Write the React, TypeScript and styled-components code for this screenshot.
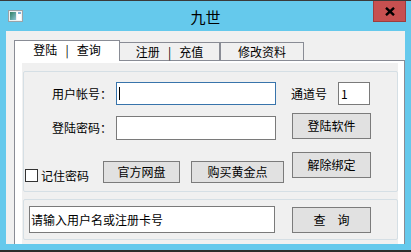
import React from 'react';
import styled, { createGlobalStyle } from 'styled-components';

const GlobalStyle = createGlobalStyle`
    html, body {
        margin: 0;
        padding: 0;
        background: #65c9ec;
    }
    body {
        font-family: "Noto Sans CJK SC", "Noto Sans", sans-serif;
        font-size: 12px;
        color: #000;
    }
    * {
        box-sizing: border-box;
    }
`;

const Window = styled.div`
    width: 411px;
    height: 252px;
    background: #65c9ec;
    border-top: 1px solid #3a3a3a;
    border-bottom: 2px solid #2b2b2b;
    display: flex;
    flex-direction: column;
    overflow: hidden;
`;

const TitleBar = styled.div`
    height: 30px;
    display: grid;
    grid-template-columns: 1fr auto 1fr;
    flex-shrink: 0;
`;

const AppIcon = styled.div`
    padding: 9px 0 0 8px;
    line-height: 0;
`;

const Title = styled.div`
    font-size: 15px;
    line-height: 30px;
    padding-top: 1px;
`;

const TitleRight = styled.div`
    display: flex;
    justify-content: flex-end;
    align-items: flex-start;
    padding-right: 5px;
`;

const CloseButton = styled.div`
    width: 33px;
    height: 21px;
    background: #c75050;
    border: 1px solid #9e3d3d;
    border-top: none;
    display: flex;
    align-items: center;
    justify-content: center;
`;

const Client = styled.div`
    margin: 0 6px;
    height: 213px;
    background: #f0f0f0;
    padding-top: 9px;
    overflow: hidden;
`;

const TabStrip = styled.div`
    display: flex;
    align-items: flex-end;
    height: 20px;
    padding-left: 8px;
`;

const Tab = styled.div<{ $active?: boolean; $width: number; $leftBorder?: boolean }>`
    width: ${p => p.$width}px;
    height: ${p => (p.$active ? 21 : 18)}px;
    margin-bottom: ${p => (p.$active ? -1 : 0)}px;
    position: relative;
    z-index: ${p => (p.$active ? 1 : 0)};
    background: ${p => (p.$active ? '#ffffff' : '#f0f0f0')};
    border-top: 1px solid #898c95;
    border-right: 1px solid #898c95;
    border-left: ${p => (p.$leftBorder ? '1px solid #898c95' : 'none')};
    display: flex;
    align-items: center;
    justify-content: center;
    white-space: nowrap;
    line-height: 16px;
    padding-bottom: ${p => (p.$active ? 2 : 0)}px;
`;

const TabSep = styled.span`
    margin: 0 8px;
`;

const TabPanel = styled.div`
    margin-left: 8px;
    width: 391px;
    height: 184px;
    background: #ffffff;
    border: 1px solid #898c95;
    border-bottom: none;
    padding: 2px 6px 0 7px;
`;

const PanelBody = styled.div`
    height: 100%;
    background: #f0f0f0;
    padding: 8px 0 0 1px;
`;

const GroupBox = styled.div<{ $height: number }>`
    height: ${p => p.$height}px;
    border: 1px solid #d5dfe5;
    border-radius: 2px;
`;

const LoginGroup = styled(GroupBox)`
    display: grid;
    grid-template-columns: 267px 1fr;
    padding-top: 10px;
`;

const SearchGroup = styled(GroupBox)`
    margin-top: 7px;
    display: flex;
    align-items: flex-start;
    padding: 6px 0 0 5px;
`;

const Column = styled.div`
    display: flex;
    flex-direction: column;
    align-items: flex-start;
`;

const FieldRow = styled.div<{ $gap?: number }>`
    display: flex;
    align-items: center;
    margin-top: ${p => p.$gap ?? 0}px;
`;

const Label = styled.div`
    width: 88px;
    margin-right: 4px;
    text-align: right;
    line-height: 16px;
`;

const TextBox = styled.div<{ $width: number; $height: number; $focused?: boolean; $pad?: number }>`
    width: ${p => p.$width}px;
    height: ${p => p.$height}px;
    background: #ffffff;
    border: 1px solid ${p => (p.$focused ? '#3874ab' : '#7a7a7a')};
    display: flex;
    align-items: center;
    padding-left: ${p => p.$pad ?? 1}px;
    white-space: nowrap;
    overflow: hidden;
    line-height: 16px;
`;

const Caret = styled.span`
    width: 1px;
    height: 13px;
    margin-left: 1px;
    background: #000;
`;

const ActionRow = styled.div`
    display: flex;
    align-items: flex-start;
    margin-top: 21px;
    height: 22px;
`;

const CheckLabel = styled.label`
    display: flex;
    align-items: center;
    height: 13px;
    margin: 8px 0 0 1px;
    line-height: 13px;
`;

const CheckBox = styled.span`
    width: 13px;
    height: 13px;
    background: #ffffff;
    border: 1px solid #333333;
    margin-right: 3px;
`;

const Button = styled.div<{ $width: number; $height: number; $gap?: number; $top?: number }>`
    width: ${p => p.$width}px;
    height: ${p => p.$height}px;
    margin-left: ${p => p.$gap ?? 0}px;
    margin-top: ${p => p.$top ?? 0}px;
    background: #e1e1e1;
    border: 1px solid #7b7b7b;
    display: flex;
    align-items: center;
    justify-content: center;
    line-height: 16px;
    white-space: pre;
`;

const ChannelText = styled.span`
    line-height: 16px;
    margin-right: 11px;
`;

function WindowIcon() {
    return (
        <svg width="15" height="12" viewBox="0 0 15 12">
            <defs>
                <linearGradient id="ic" x1="0" y1="0" x2="1" y2="1">
                    <stop offset="0" stopColor="#2f7f62" />
                    <stop offset="1" stopColor="#8cc6d6" />
                </linearGradient>
            </defs>
            <rect x="0.5" y="0.5" width="14" height="11" fill="#eef2f3" stroke="#9aa3a8" />
            <rect x="2" y="2" width="6" height="8" fill="url(#ic)" />
            <rect x="9" y="2" width="4" height="8" fill="#ffffff" />
            <rect x="10" y="2" width="3" height="2" fill="#7fb2d9" />
        </svg>
    );
}

function CloseGlyph() {
    return (
        <svg width="10" height="9" viewBox="0 0 10 9">
            <path d="M1 0.8 L9 8.2 M9 0.8 L1 8.2" stroke="#000" strokeWidth="2.4" strokeLinecap="butt" />
        </svg>
    );
}

export default function App() {
    return (
        <>
            <GlobalStyle />
            <Window>
                <TitleBar>
                    <AppIcon><WindowIcon /></AppIcon>
                    <Title>九世</Title>
                    <TitleRight>
                        <CloseButton><CloseGlyph /></CloseButton>
                    </TitleRight>
                </TitleBar>
                <Client>
                    <TabStrip>
                        <Tab $active $leftBorder $width={106}>登陆<TabSep>|</TabSep>查询</Tab>
                        <Tab $width={100}>注册<TabSep>|</TabSep>充值</Tab>
                        <Tab $leftBorder $width={84}>修改资料</Tab>
                    </TabStrip>
                    <TabPanel>
                        <PanelBody>
                            <LoginGroup $height={121}>
                                <Column>
                                    <FieldRow>
                                        <Label>用户帐号：</Label>
                                        <TextBox $width={160} $height={23} $focused>
                                            <Caret />
                                        </TextBox>
                                    </FieldRow>
                                    <FieldRow $gap={11}>
                                        <Label>登陆密码：</Label>
                                        <TextBox $width={160} $height={24} />
                                    </FieldRow>
                                    <ActionRow>
                                        <CheckLabel>
                                            <CheckBox />
                                            记住密码
                                        </CheckLabel>
                                        <Button $width={77} $height={22} $gap={14}>官方网盘</Button>
                                        <Button $width={93} $height={22} $gap={11}>购买黄金点</Button>
                                    </ActionRow>
                                </Column>
                                <Column>
                                    <FieldRow>
                                        <ChannelText>通道号</ChannelText>
                                        <TextBox $width={32} $height={23} $pad={2}>1</TextBox>
                                    </FieldRow>
                                    <Button $width={79} $height={26} $gap={1} $top={8}>登陆软件</Button>
                                    <Button $width={79} $height={26} $gap={1} $top={13}>解除绑定</Button>
                                </Column>
                            </LoginGroup>
                            <SearchGroup $height={41}>
                                <TextBox $width={246} $height={27}>请输入用户名或注册卡号</TextBox>
                                <Button $width={79} $height={26} $gap={17} $top={1}>{'查　询'}</Button>
                            </SearchGroup>
                        </PanelBody>
                    </TabPanel>
                </Client>
            </Window>
        </>
    );
}
